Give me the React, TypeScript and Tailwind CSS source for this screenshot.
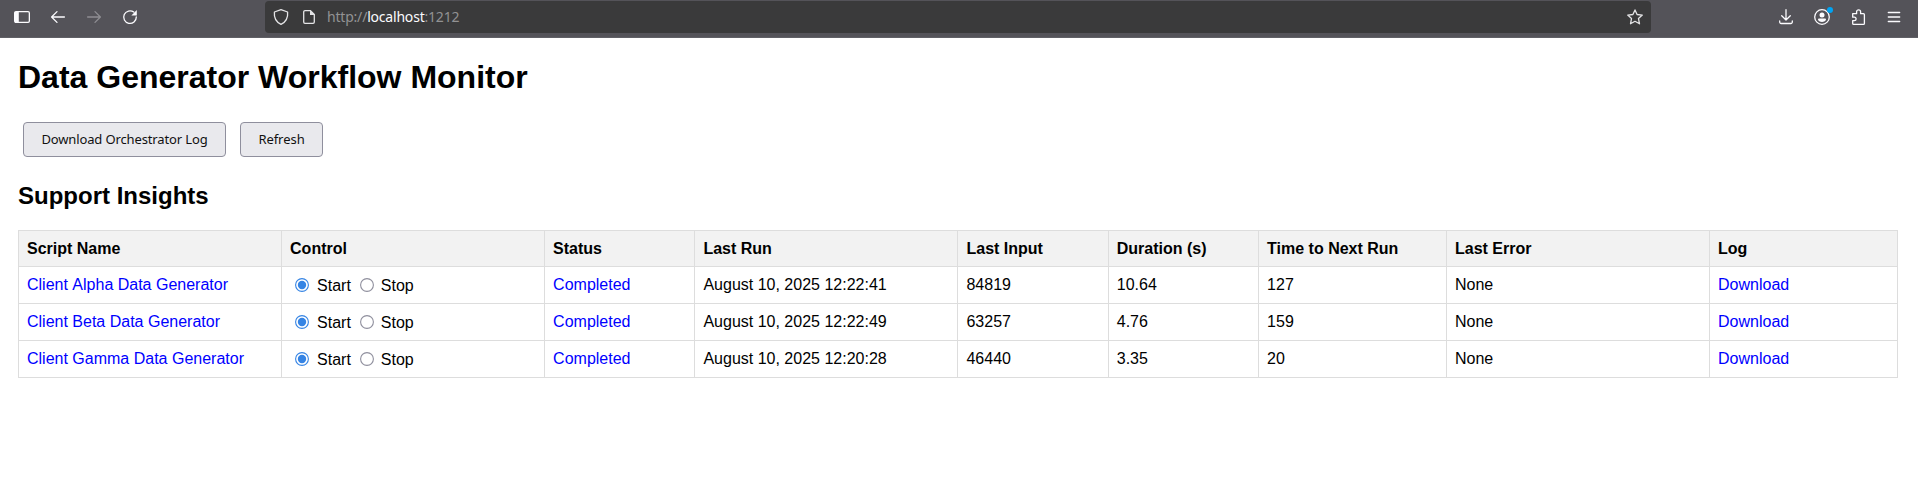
import type { ReactNode } from 'react';

function Icon({ children, className = '' }: { children: ReactNode; className?: string }) {
  return (
    <svg
      viewBox="0 0 16 16"
      fill="none"
      stroke="currentColor"
      strokeWidth="1.3"
      strokeLinecap="round"
      strokeLinejoin="round"
      className={`size-4 shrink-0 overflow-visible ${className}`}
    >
      {children}
    </svg>
  );
}

function Toolbar() {
  return (
    <header className="flex h-[38px] items-start border-b border-[#606066] bg-[#545359] pt-px text-[#fbfbfe]">
      <div className="flex h-8 w-[265px] items-center gap-5 pl-[14px]">
        <Icon>
          <rect x="0.65" y="2.65" width="14.7" height="10.7" rx="1.3" />
          <path d="M1 3h3.8v10H1z" fill="currentColor" stroke="none" />
        </Icon>
        <Icon>
          <path d="M14.4 8H1.8M7 2.6 1.6 8 7 13.4" />
        </Icon>
        <Icon className="text-[#8e8d92]">
          <path d="M1.6 8h12.6M9 2.6 14.4 8 9 13.4" />
        </Icon>
        <Icon>
          <path d="M11.8 3.1A6.3 6.3 0 1 0 14.3 8" />
          <path d="M14.8 1v5.400H9.400z" fill="currentColor" stroke="none" />
        </Icon>
      </div>
      <div className="flex h-8 w-[1386px] items-center rounded bg-[#3a3a3b] pl-2 pr-2">
        <Icon className="text-[#e4e4e6]">
          <path d="M8 .7 14.6 3c.5 5-1 9.6-6.6 12.400C2.400 12.600.9 8 1.400 3z" />
        </Icon>
        <Icon className="ml-3 text-[#e4e4e6]">
          <path d="M9.500 1.700H4A1.300 1.300 0 0 0 2.700 3v10A1.300 1.300 0 0 0 4 14.300h8a1.300 1.300 0 0 0 1.300-1.300V5.500z" />
          <path d="M9 1.200v4.800h4.800z" fill="currentColor" stroke="none" />
        </Icon>
        <span className="ml-[10px] flex-1 whitespace-nowrap font-['Noto_Sans',sans-serif] text-[14px] leading-8 tracking-[-0.2px] text-[#929293]">
          http://<span className="text-[#fbfbfe]">localhost</span>:1212
        </span>
        <Icon className="text-[#e4e4e6]">
          <path d="m8 .9 2.100 4.600 5.200.6-3.800 3.500 1 5.200L8 12.300l-4.500 2.500 1-5.200L.7 6.100l5.200-.6z" />
        </Icon>
      </div>
      <div className="flex h-8 flex-1 items-center justify-end gap-5 pr-4">
        <Icon>
          <path d="M8 .7v10M3.700 6.800 8 11l4.300-4.200M1.700 12v1.100a1.400 1.400 0 0 0 1.400 1.400h9.800a1.400 1.400 0 0 0 1.400-1.400V12" />
        </Icon>
        <Icon>
          <circle cx="8" cy="8" r="7.300" />
          <circle cx="8" cy="5.900" r="2.500" fill="currentColor" stroke="none" />
          <path d="M4 10.900c0-.8.500-1.300 1.300-1.300h5.400c.8 0 1.300.5 1.300 1.300-.9 1.200-2.300 2-4 2s-3.100-.8-4-2z" fill="currentColor" stroke="none" />
          <circle cx="16" cy="1" r="3" fill="#00a4f4" stroke="none" />
        </Icon>
        <Icon>
          <path d="M2.700 4.700h3.900V2.800a2 2 0 0 1 4 0v1.900h2.800a1 1 0 0 1 1 1v8.700a1 1 0 0 1-1 1H3.700a1 1 0 0 1-1-1v-2.800h1.700a1.700 1.700 0 0 0 0-3.400H2.700z" />
        </Icon>
        <Icon>
          <path d="M2.300 3.500h11.400M2.300 8h11.400M2.300 12.500h11.400" />
        </Icon>
      </div>
    </header>
  );
}

function PushButton({ children, className }: { children: ReactNode; className: string }) {
  return (
    <button
      className={`h-[35px] whitespace-nowrap rounded border border-[#8f8f9d] bg-[#e9e9ed] text-center font-['Noto_Sans',sans-serif] text-[13px] leading-[33px] text-[#111111] ${className}`}
    >
      {children}
    </button>
  );
}

function Radio({ checked = false }: { checked?: boolean }) {
  return (
    <svg viewBox="0 0 14 14" className="mb-px size-[14px] shrink-0" role="radio" aria-checked={checked}>
      <circle cx="7" cy="7" r="6.400" fill="#fff" stroke={checked ? '#3584e4' : '#8f8f9d'} strokeWidth="1.100" />
      {checked && <circle cx="7" cy="7" r="4.200" fill="#3584e4" />}
    </svg>
  );
}

const columns = ['Script Name', 'Control', 'Status', 'Last Run', 'Last Input', 'Duration (s)', 'Time to Next Run', 'Last Error', 'Log'];

const rows = [
  { name: 'Client Alpha Data Generator', lastRun: 'August 10, 2025 12:22:41', input: '84819', duration: '10.64', next: '127' },
  { name: 'Client Beta Data Generator', lastRun: 'August 10, 2025 12:22:49', input: '63257', duration: '4.76', next: '159' },
  { name: 'Client Gamma Data Generator', lastRun: 'August 10, 2025 12:20:28', input: '46440', duration: '3.35', next: '20' },
];

const cell = 'border border-[#dddddd] px-2 py-0 text-left align-middle';

export default function App() {
  return (
    <div className="h-[487px] overflow-hidden bg-white font-['Liberation_Sans',Arial,sans-serif] text-base text-black">
      <Toolbar />
      <main className="pl-[18px] pr-5">
        <h1 className="pt-[21px] text-[32px] font-bold leading-9">Data Generator Workflow Monitor</h1>
        <div className="mt-[27px] flex gap-[14px] pl-[5px]">
          <PushButton className="w-[203px] tracking-[-0.13px]">Download Orchestrator Log</PushButton>
          <PushButton className="w-[83px] tracking-[-0.05px]">Refresh</PushButton>
        </div>
        <h2 className="mt-[25px] text-2xl font-bold leading-7">Support Insights</h2>
        <table className="mt-5 w-full table-fixed border-collapse">
          <colgroup>
            <col className="w-[14%]" />
            <col className="w-[14%]" />
            <col className="w-[8%]" />
            <col className="w-[14%]" />
            <col className="w-[8%]" />
            <col className="w-[8%]" />
            <col className="w-[10%]" />
            <col className="w-[14%]" />
            <col className="w-[10%]" />
          </colgroup>
          <thead>
            <tr className="h-9 bg-[#f2f2f2]">
              {columns.map((c) => (
                <th key={c} className={`${cell} font-bold`}>{c}</th>
              ))}
            </tr>
          </thead>
          <tbody>
            {rows.map((r) => (
              <tr key={r.name} className="h-[37px]">
                <td className={cell}><a className="text-[#0000ff] [font-kerning:none]">{r.name}</a></td>
                <td className={cell}>
                  <div className="flex items-center pl-[5px] pt-px leading-5">
                    <Radio checked />
                    <span className="ml-2">Start</span>
                    <span className="ml-[9px] flex"><Radio /></span>
                    <span className="ml-[7px]">Stop</span>
                  </div>
                </td>
                <td className={`${cell} text-[#0000ff]`}>Completed</td>
                <td className={cell}>{r.lastRun}</td>
                <td className={cell}>{r.input}</td>
                <td className={cell}>{r.duration}</td>
                <td className={cell}>{r.next}</td>
                <td className={cell}>None</td>
                <td className={cell}><a className="text-[#0000ff]">Download</a></td>
              </tr>
            ))}
          </tbody>
        </table>
      </main>
    </div>
  );
}
